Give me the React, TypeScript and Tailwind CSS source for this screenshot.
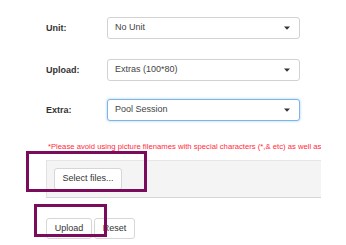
import React from "react";

function Caret() {
  return (
    <svg width="6" height="4" viewBox="0 0 6 4" className="shrink-0">
      <path d="M0 0.5 L6 0.5 L3 3.8 Z" fill="#333" />
    </svg>
  );
}

function Row({ label, value, focus, mt }: { label: string; value: string; focus?: boolean; mt: string }) {
  return (
    <div className={`flex items-center ${mt}`}>
      <div className="w-[61px] text-[9px] font-bold leading-[11px] text-[#333]">{label}</div>
      <div
        className={
          focus
            ? "flex h-[22px] w-[193px] items-center justify-between rounded-[3px] border border-[#7fb4e6] bg-white pl-[7px] pr-[9px] text-[9px] text-[#444] shadow-[0_0_3px_rgba(102,175,233,0.6)]"
            : "flex h-[22px] w-[193px] items-center justify-between rounded-[3px] border border-[#d2d2d2] bg-white pl-[7px] pr-[9px] text-[9px] text-[#444]"
        }
      >
        <span>{value}</span>
        <Caret />
      </div>
    </div>
  );
}

export default function App() {
  return (
    <div className="relative h-[245px] w-[346px] overflow-hidden bg-white font-['Liberation_Sans',Arial,sans-serif] text-[#333]">
      <div className="pl-[46px] pt-[17px]">
        <Row label="Unit:" value="No Unit" mt="mt-0" />
        <Row label="Upload:" value="Extras (100*80)" mt="mt-[20px]" />
        <Row label="Extra:" value="Pool Session" focus mt="mt-[18px]" />
        <div className="mt-[21px] w-[275px] overflow-hidden whitespace-nowrap pl-[2px] text-[7.7px] leading-[10px] text-[#ff2a3a]">
          *Please avoid using picture filenames with special characters (*,&amp; etc) as well as spaces
        </div>
        <div className="mt-[8px] h-[38px] w-[275px] border-b border-l border-t border-b-[#d6d6d6] border-l-[#e2e2e2] border-t-[#e6e6e6] bg-[#f4f4f4] pl-[7px] pt-[7px]">
          <div className="flex h-[22px] w-[68px] items-center justify-center rounded-[3px] border border-[#d6d6d6] bg-white text-[9px] text-[#333]">
            Select files...
          </div>
        </div>
        <div className="mt-[20px] flex gap-[2px]">
          <div className="flex h-[21px] w-[46px] items-center justify-center rounded-[3px] border border-[#d6d6d6] bg-white text-[9px] text-[#333]">
            Upload
          </div>
          <div className="flex h-[21px] w-[41px] items-center justify-center rounded-[3px] border border-[#d6d6d6] bg-white text-[9px] text-[#333]">
            Reset
          </div>
        </div>
      </div>
      <div className="absolute left-[26px] top-[151px] h-[41px] w-[121px] border-[3px] border-[#7b0c5c]" />
      <div className="absolute left-[34px] top-[204px] h-[33px] w-[73px] border-[3px] border-[#7b0c5c]" />
    </div>
  );
}
